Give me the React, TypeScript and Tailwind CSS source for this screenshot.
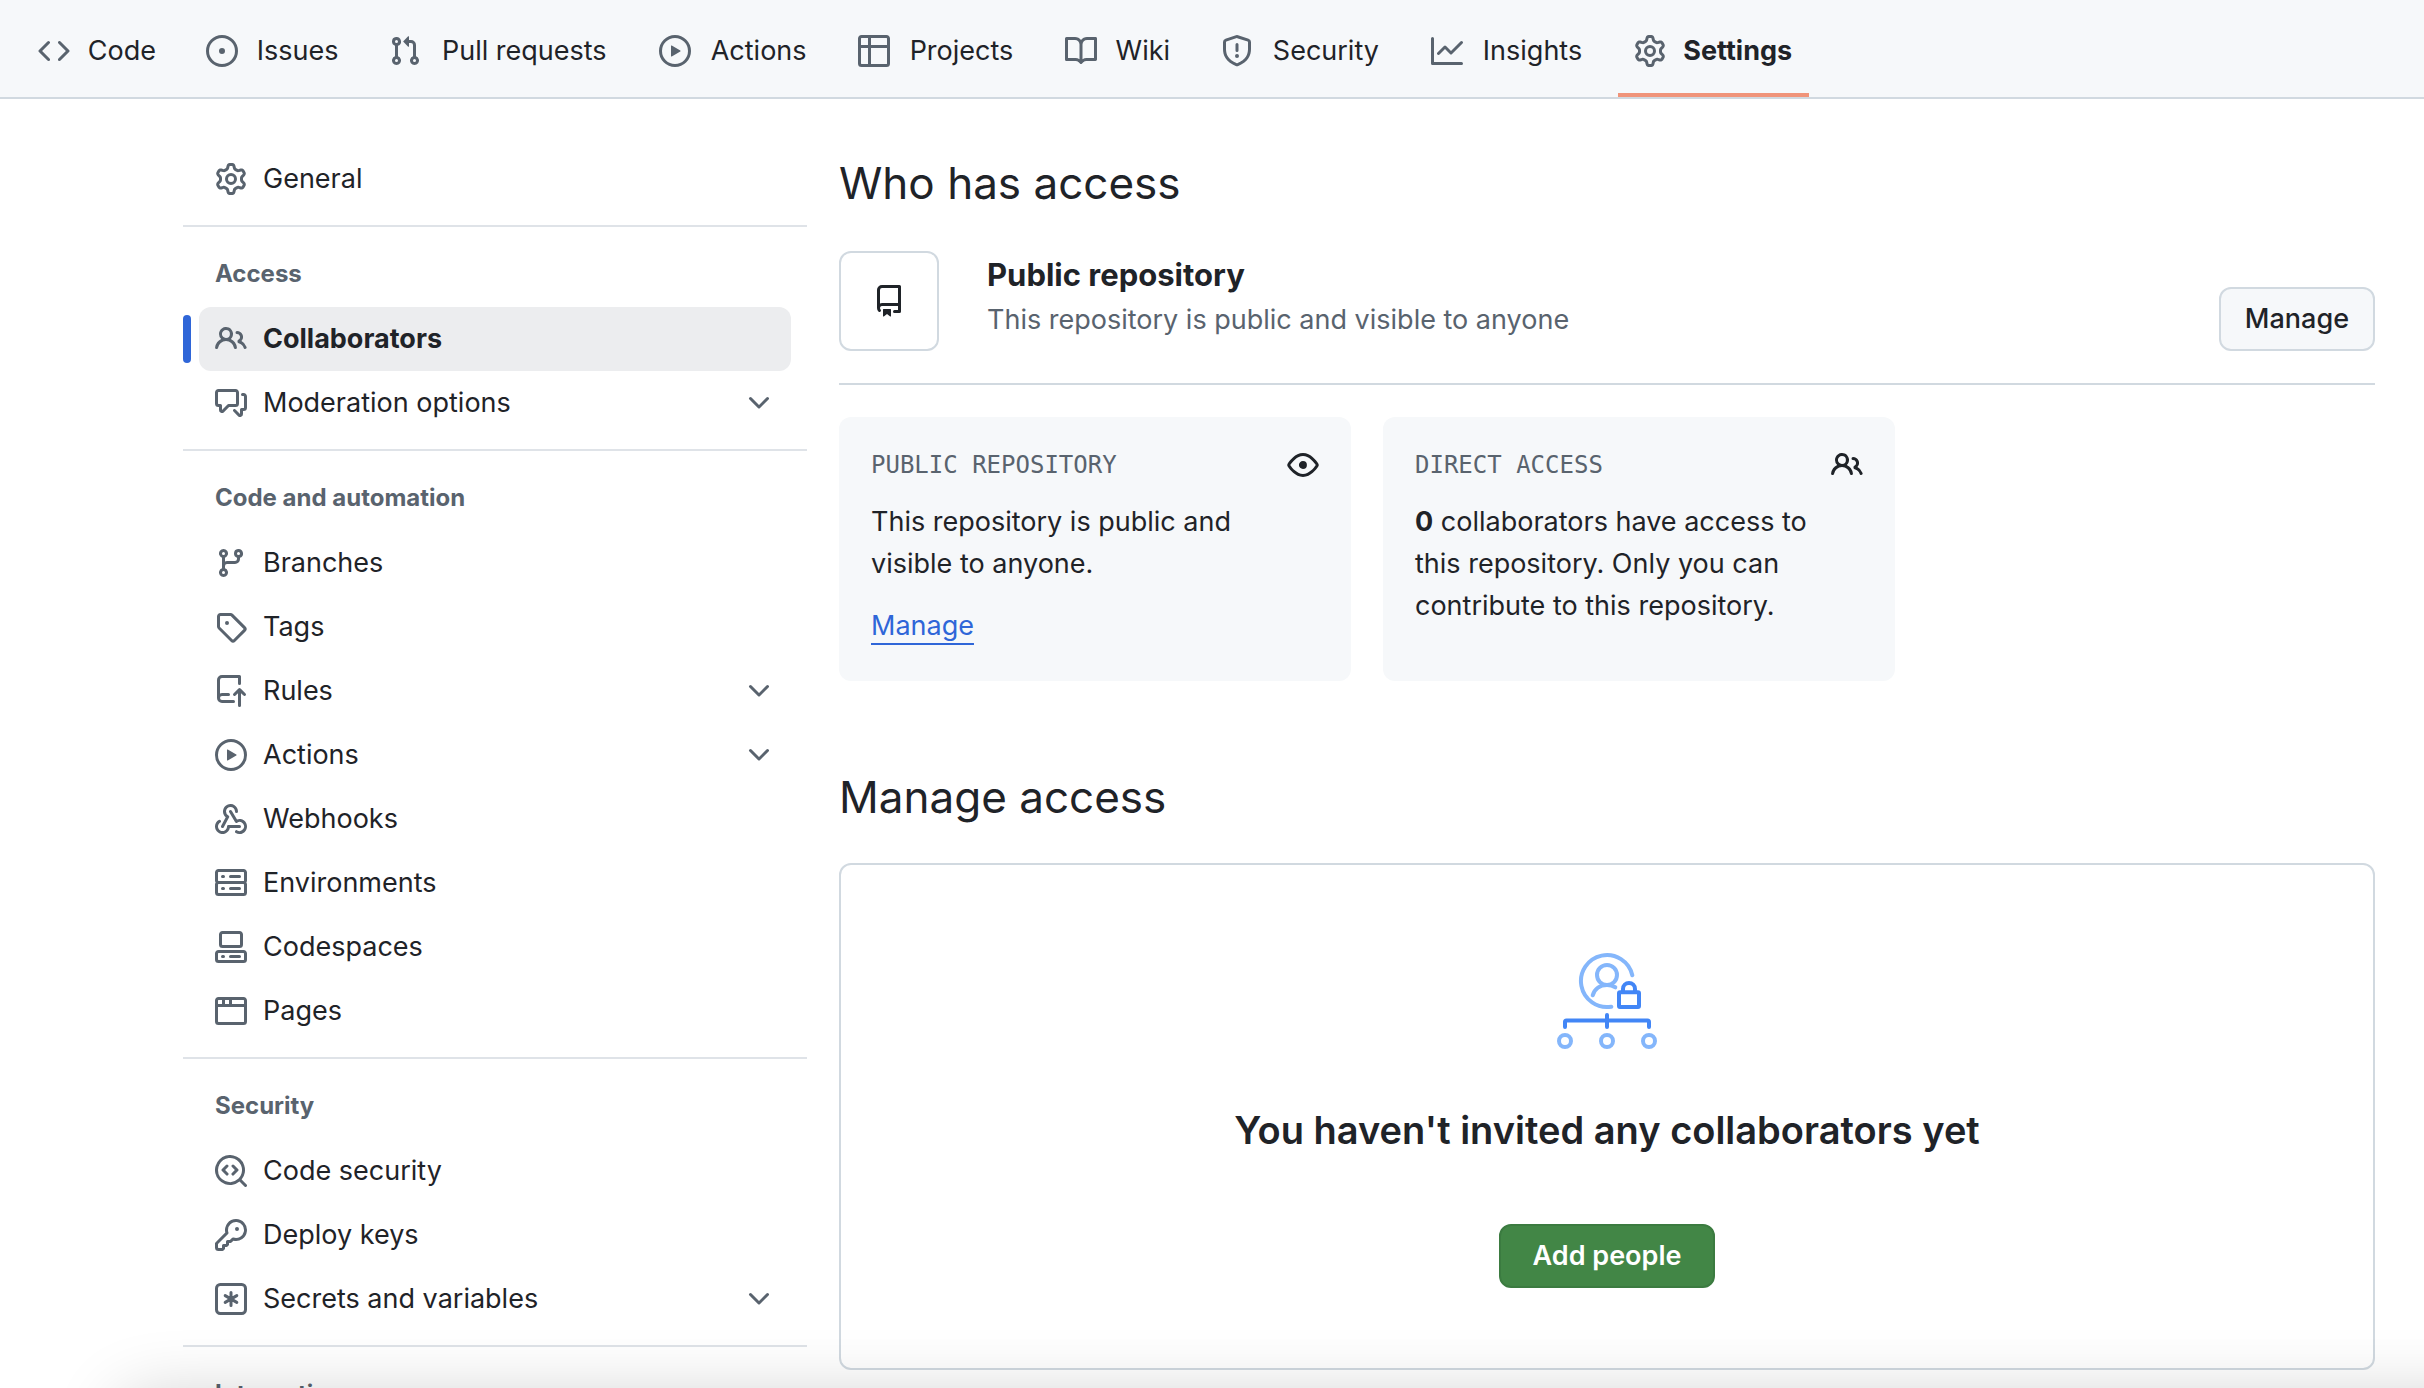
import type { ReactNode } from "react";

const paths = {
  code: "m11.28 3.22 4.25 4.25a.75.75 0 0 1 0 1.06l-4.25 4.25a.749.749 0 0 1-1.275-.326.749.749 0 0 1 .215-.734L13.94 8l-3.72-3.72a.749.749 0 0 1 .326-1.275.749.749 0 0 1 .734.215Zm-6.56 0a.751.751 0 0 1 1.042.018.751.751 0 0 1 .018 1.042L2.06 8l3.72 3.72a.749.749 0 0 1-.326 1.275.749.749 0 0 1-.734-.215L.47 8.53a.75.75 0 0 1 0-1.06Z",
  issue: "M8 9.5a1.5 1.5 0 1 0 0-3 1.5 1.5 0 0 0 0 3ZM8 0a8 8 0 1 1 0 16A8 8 0 0 1 8 0ZM1.5 8a6.5 6.5 0 1 0 13 0 6.5 6.5 0 0 0-13 0Z",
  pull: "M1.5 3.25a2.25 2.25 0 1 1 3 2.122v5.256a2.251 2.251 0 1 1-1.5 0V5.372A2.25 2.25 0 0 1 1.5 3.25Zm5.677-.177L9.573.677A.25.25 0 0 1 10 .854V2.5h1A2.5 2.5 0 0 1 13.5 5v5.628a2.251 2.251 0 1 1-1.5 0V5a1 1 0 0 0-1-1h-1v1.646a.25.25 0 0 1-.427.177L7.177 3.427a.25.25 0 0 1 0-.354ZM3.75 2.5a.75.75 0 1 0 0 1.5.75.75 0 0 0 0-1.5Zm0 9.5a.75.75 0 1 0 0 1.5.75.75 0 0 0 0-1.5Zm8.25.75a.75.75 0 1 0 1.5 0 .75.75 0 0 0-1.5 0Z",
  play: "M8 0a8 8 0 1 1 0 16A8 8 0 0 1 8 0ZM1.5 8a6.5 6.5 0 1 0 13 0 6.5 6.5 0 0 0-13 0Zm4.879-2.773 4.264 2.559a.25.25 0 0 1 0 .428l-4.264 2.559A.25.25 0 0 1 6 10.559V5.442a.25.25 0 0 1 .379-.215Z",
  table: "M0 1.75C0 .784.784 0 1.75 0h12.5C15.216 0 16 .784 16 1.75v12.5A1.75 1.75 0 0 1 14.25 16H1.75A1.75 1.75 0 0 1 0 14.25ZM6.5 6.5v8h7.75a.25.25 0 0 0 .25-.25V6.5Zm8-1.5V1.75a.25.25 0 0 0-.25-.25H6.5V5Zm-13 1.5v7.75c0 .138.112.25.25.25H5v-8ZM5 5V1.5H1.75a.25.25 0 0 0-.25.25V5Z",
  book: "M0 1.75A.75.75 0 0 1 .75 1h4.253c1.227 0 2.317.59 3 1.501A3.743 3.743 0 0 1 11.006 1h4.245a.75.75 0 0 1 .75.75v10.5a.75.75 0 0 1-.75.75h-4.507a2.25 2.25 0 0 0-1.591.659l-.622.621a.75.75 0 0 1-1.06 0l-.622-.621A2.25 2.25 0 0 0 5.258 13H.75a.75.75 0 0 1-.75-.75Zm7.251 10.324.004-5.073-.002-2.253A2.25 2.25 0 0 0 5.003 2.5H1.5v9h3.757a3.75 3.75 0 0 1 1.994.574ZM8.755 4.75l-.004 7.322a3.752 3.752 0 0 1 1.992-.572H14.5v-9h-3.495a2.25 2.25 0 0 0-2.25 2.25Z",
  shield: "M7.467.133a1.748 1.748 0 0 1 1.066 0l5.25 1.68A1.75 1.75 0 0 1 15 3.48V7c0 1.566-.32 3.182-1.303 4.682-.983 1.498-2.585 2.813-5.032 3.855a1.697 1.697 0 0 1-1.33 0c-2.447-1.042-4.049-2.357-5.032-3.855C1.32 10.182 1 8.566 1 7V3.48a1.755 1.755 0 0 1 1.217-1.667Zm.61 1.429a.25.25 0 0 0-.153 0l-5.25 1.68a.25.25 0 0 0-.174.238V7c0 1.358.275 2.666 1.057 3.86.784 1.194 2.121 2.34 4.366 3.297a.196.196 0 0 0 .154 0c2.245-.956 3.582-2.104 4.366-3.298C13.225 9.666 13.5 8.36 13.5 7V3.48a.251.251 0 0 0-.174-.237l-5.25-1.68ZM8.75 4.75v3a.75.75 0 0 1-1.5 0v-3a.75.75 0 0 1 1.5 0ZM9 10.5a1 1 0 1 1-2 0 1 1 0 0 1 2 0Z",
  graph: "M1.5 1.75V13.5h13.75a.75.75 0 0 1 0 1.5H.75a.75.75 0 0 1-.75-.75V1.75a.75.75 0 0 1 1.5 0Zm14.28 2.53-5.25 5.25a.75.75 0 0 1-1.06 0L7 7.06 4.28 9.78a.751.751 0 0 1-1.042-.018.751.751 0 0 1-.018-1.042l3.25-3.25a.75.75 0 0 1 1.06 0L10 7.94l4.72-4.72a.751.751 0 0 1 1.042.018.751.751 0 0 1 .018 1.042Z",
  gear: "M8 0a8.2 8.2 0 0 1 .701.031C9.444.095 9.99.645 10.16 1.29l.288 1.107c.018.066.079.158.212.224.231.114.454.243.668.386.123.082.233.09.299.071l1.103-.303c.644-.176 1.392.021 1.82.63.27.385.506.792.704 1.218.315.675.111 1.422-.364 1.891l-.814.806c-.049.048-.098.147-.088.294.016.257.016.515 0 .772-.01.147.038.246.088.294l.814.806c.475.469.679 1.216.364 1.891a7.977 7.977 0 0 1-.704 1.217c-.428.61-1.176.807-1.82.63l-1.102-.302c-.067-.019-.177-.011-.3.071a5.909 5.909 0 0 1-.668.386c-.133.066-.194.158-.211.224l-.29 1.106c-.168.646-.715 1.196-1.458 1.26a8.006 8.006 0 0 1-1.402 0c-.743-.064-1.289-.614-1.458-1.26l-.289-1.106c-.018-.066-.079-.158-.212-.224a5.738 5.738 0 0 1-.668-.386c-.123-.082-.233-.09-.299-.071l-1.103.303c-.644.176-1.392-.021-1.82-.63a8.12 8.12 0 0 1-.704-1.218c-.315-.675-.111-1.422.363-1.891l.815-.806c.05-.048.098-.147.088-.294a6.214 6.214 0 0 1 0-.772c.01-.147-.038-.246-.088-.294l-.815-.806C.635 6.045.431 5.298.746 4.623a7.92 7.92 0 0 1 .704-1.217c.428-.61 1.176-.807 1.82-.63l1.102.302c.067.019.177.011.3-.071.214-.143.437-.272.668-.386.133-.066.194-.158.211-.224l.29-1.106C6.009.645 6.556.095 7.299.03 7.53.01 7.764 0 8 0Zm-.571 1.525c-.036.003-.108.036-.137.146l-.289 1.105c-.147.561-.549.967-.998 1.189-.173.086-.34.183-.5.29-.417.278-.97.423-1.529.27l-1.103-.303c-.109-.03-.175.016-.195.045-.22.312-.412.644-.573.99-.014.031-.021.11.059.19l.815.806c.411.406.562.957.53 1.456a4.709 4.709 0 0 0 0 .582c.032.499-.119 1.05-.53 1.456l-.815.806c-.081.08-.073.159-.059.19.162.346.353.677.573.989.02.03.085.076.195.046l1.102-.303c.56-.153 1.113-.008 1.53.27.161.107.328.204.501.29.447.222.85.629.997 1.189l.289 1.105c.029.109.101.143.137.146a6.6 6.6 0 0 0 1.142 0c.036-.003.108-.036.137-.146l.289-1.105c.147-.561.549-.967.998-1.189.173-.086.34-.183.5-.29.417-.278.97-.423 1.529-.27l1.103.303c.109.029.175-.016.195-.045.22-.313.411-.644.573-.99.014-.031.021-.11-.059-.19l-.815-.806c-.411-.406-.562-.957-.53-1.456a4.709 4.709 0 0 0 0-.582c-.032-.499.119-1.05.53-1.456l.815-.806c.081-.08.073-.159.059-.19a6.464 6.464 0 0 0-.573-.989c-.02-.03-.085-.076-.195-.046l-1.102.303c-.56.153-1.113.008-1.53-.27a4.44 4.44 0 0 0-.501-.29c-.447-.222-.85-.629-.997-1.189l-.289-1.105c-.029-.11-.101-.143-.137-.146a6.6 6.6 0 0 0-1.142 0ZM11 8a3 3 0 1 1-6 0 3 3 0 0 1 6 0ZM9.5 8a1.5 1.5 0 1 0-3.001.001A1.5 1.5 0 0 0 9.5 8Z",
  people: "M2 5.5a3.5 3.5 0 1 1 5.898 2.549 5.508 5.508 0 0 1 3.034 4.084.75.75 0 1 1-1.482.235 4 4 0 0 0-7.9 0 .75.75 0 0 1-1.482-.236A5.507 5.507 0 0 1 3.102 8.05 3.493 3.493 0 0 1 2 5.5ZM11 4a3.001 3.001 0 0 1 2.22 5.018 5.01 5.01 0 0 1 2.56 3.012.749.749 0 0 1-.885.954.752.752 0 0 1-.549-.514 3.507 3.507 0 0 0-2.522-2.372.75.75 0 0 1-.574-.73v-.352a.75.75 0 0 1 .416-.672A1.5 1.5 0 0 0 11 5.5.75.75 0 0 1 11 4Zm-5.5-.5a2 2 0 1 0-.001 3.999A2 2 0 0 0 5.5 3.5Z",
  discussion: "M1.75 1h8.5c.966 0 1.75.784 1.75 1.75v5.5A1.75 1.75 0 0 1 10.25 10H7.061l-2.574 2.573A1.458 1.458 0 0 1 2 11.543V10h-.25A1.75 1.75 0 0 1 0 8.25v-5.5C0 1.784.784 1 1.75 1ZM1.5 2.75v5.5c0 .138.112.25.25.25h1a.75.75 0 0 1 .75.75v2.19l2.72-2.72a.749.749 0 0 1 .53-.22h3.5a.25.25 0 0 0 .25-.25v-5.5a.25.25 0 0 0-.25-.25h-8.5a.25.25 0 0 0-.25.25Zm13 2a.25.25 0 0 0-.25-.25h-.5a.75.75 0 0 1 0-1.5h.5c.966 0 1.75.784 1.75 1.75v5.5A1.75 1.75 0 0 1 14.25 12H14v1.543a1.458 1.458 0 0 1-2.487 1.03L9.22 12.28a.749.749 0 0 1 .326-1.275.749.749 0 0 1 .734.215l2.22 2.22v-2.19a.75.75 0 0 1 .75-.75h1a.25.25 0 0 0 .25-.25Z",
  branch: "M9.5 3.25a2.25 2.25 0 1 1 3 2.122V6A2.5 2.5 0 0 1 10 8.5H6a1 1 0 0 0-1 1v1.128a2.251 2.251 0 1 1-1.5 0V5.372a2.25 2.25 0 1 1 1.5 0v1.836A2.493 2.493 0 0 1 6 7h4a1 1 0 0 0 1-1v-.628A2.25 2.25 0 0 1 9.5 3.25Zm-6 0a.75.75 0 1 0 1.5 0 .75.75 0 0 0-1.5 0Zm8.25-.75a.75.75 0 1 0 0 1.5.75.75 0 0 0 0-1.5ZM4.25 12a.75.75 0 1 0 0 1.5.75.75 0 0 0 0-1.5Z",
  tag: "M1 7.775V2.75C1 1.784 1.784 1 2.75 1h5.025c.464 0 .91.184 1.238.513l6.25 6.25a1.75 1.75 0 0 1 0 2.474l-5.026 5.026a1.75 1.75 0 0 1-2.474 0l-6.25-6.25A1.752 1.752 0 0 1 1 7.775Zm1.5 0c0 .066.026.13.073.177l6.25 6.25a.25.25 0 0 0 .354 0l5.025-5.025a.25.25 0 0 0 0-.354l-6.25-6.25a.25.25 0 0 0-.177-.073H2.75a.25.25 0 0 0-.25.25ZM6 5a1 1 0 1 1 0 2 1 1 0 0 1 0-2Z",
  push: "M1 2.5A2.5 2.5 0 0 1 3.5 0h8.75a.75.75 0 0 1 .75.75v3.5a.75.75 0 0 1-1.5 0V1.5h-8a1 1 0 0 0-1 1v6.708A2.493 2.493 0 0 1 3.5 9h3.25a.75.75 0 0 1 0 1.5H3.5a1 1 0 0 0 0 2h5.75a.75.75 0 0 1 0 1.5H3.5A2.5 2.5 0 0 1 1 11.5Zm13.23 7.79h-.001l-1.224-1.224v6.184a.75.75 0 0 1-1.5 0V9.066L10.28 10.29a.75.75 0 0 1-1.06-1.061l2.505-2.504a.75.75 0 0 1 1.06 0L15.29 9.23a.751.751 0 0 1-.018 1.042.751.751 0 0 1-1.042.018Z",
  webhook: "M5.5 4.25a2.25 2.25 0 0 1 4.5 0 .75.75 0 0 0 1.5 0 3.75 3.75 0 1 0-6.14 2.889l-2.272 4.258a.75.75 0 0 0 1.324.706L7 7.25a.75.75 0 0 0-.309-1.015A2.25 2.25 0 0 1 5.5 4.25ZM7.364 3.607a.75.75 0 0 1 1.03.257l2.608 4.349a3.75 3.75 0 1 1-.628 6.785.75.75 0 0 1 .752-1.299 2.25 2.25 0 1 0-.033-3.88.75.75 0 0 1-1.03-.256L7.107 4.636a.75.75 0 0 1 .257-1.03ZM2.9 8.776A.75.75 0 0 1 2.625 9.8 2.25 2.25 0 1 0 6 11.75a.75.75 0 0 1 .75-.751h5.5a.75.75 0 0 1 0 1.5H7.425a3.751 3.751 0 1 1-5.55-3.998.75.75 0 0 1 1.024.274Z",
  server: "M1.75 1h12.5c.966 0 1.75.784 1.75 1.75v4c0 .372-.116.717-.314 1 .198.283.314.628.314 1v4a1.75 1.75 0 0 1-1.75 1.75H1.75A1.75 1.75 0 0 1 0 12.75v-4c0-.358.109-.707.314-1a1.739 1.739 0 0 1-.314-1v-4C0 1.784.784 1 1.75 1ZM1.5 2.75v4c0 .138.112.25.25.25h12.5a.25.25 0 0 0 .25-.25v-4a.25.25 0 0 0-.25-.25H1.75a.25.25 0 0 0-.25.25Zm.25 5.75a.25.25 0 0 0-.25.25v4c0 .138.112.25.25.25h12.5a.25.25 0 0 0 .25-.25v-4a.25.25 0 0 0-.25-.25ZM7 4.75A.75.75 0 0 1 7.75 4h4.5a.75.75 0 0 1 0 1.5h-4.5A.75.75 0 0 1 7 4.75ZM7.75 10h4.5a.75.75 0 0 1 0 1.5h-4.5a.75.75 0 0 1 0-1.5ZM3 4.75A.75.75 0 0 1 3.75 4h.5a.75.75 0 0 1 0 1.5h-.5A.75.75 0 0 1 3 4.75ZM3.75 10h.5a.75.75 0 0 1 0 1.5h-.5a.75.75 0 0 1 0-1.5Z",
  codespaces: "M0 11.25c0-.966.784-1.75 1.75-1.75h12.5c.966 0 1.75.784 1.75 1.75v3A1.75 1.75 0 0 1 14.25 16H1.75A1.75 1.75 0 0 1 0 14.25Zm2-9.5C2 .784 2.784 0 3.75 0h8.5C13.216 0 14 .784 14 1.75v5a1.75 1.75 0 0 1-1.75 1.75h-8.5A1.75 1.75 0 0 1 2 6.75Zm1.75-.25a.25.25 0 0 0-.25.25v5c0 .138.112.25.25.25h8.5a.25.25 0 0 0 .25-.25v-5a.25.25 0 0 0-.25-.25Zm-2 9.5a.25.25 0 0 0-.25.25v3c0 .138.112.25.25.25h12.5a.25.25 0 0 0 .25-.25v-3a.25.25 0 0 0-.25-.25ZM7 12.75a.75.75 0 0 1 .75-.75h4.5a.75.75 0 0 1 0 1.5h-4.5a.75.75 0 0 1-.75-.75Zm-4 0a.75.75 0 0 1 .75-.75h.5a.75.75 0 0 1 0 1.5h-.5a.75.75 0 0 1-.75-.75Z",
  browser: "M0 2.75C0 1.784.784 1 1.75 1h12.5c.966 0 1.75.784 1.75 1.75v10.5A1.75 1.75 0 0 1 14.25 15H1.75A1.75 1.75 0 0 1 0 13.25ZM14.5 6h-13v7.25c0 .138.112.25.25.25h12.5a.25.25 0 0 0 .25-.25Zm-6-3.5v2h6V2.75a.25.25 0 0 0-.25-.25ZM5 2.5v2h2v-2Zm-3.25 0a.25.25 0 0 0-.25.25V4.5h2v-2Z",
  codescan: "M8.47 4.97a.75.75 0 0 0 0 1.06L9.94 7.5 8.47 8.97a.75.75 0 1 0 1.06 1.06l2-2a.75.75 0 0 0 0-1.06l-2-2a.75.75 0 0 0-1.06 0ZM6.53 6.03a.75.75 0 0 0-1.06-1.06l-2 2a.75.75 0 0 0 0 1.06l2 2a.75.75 0 1 0 1.06-1.06L5.06 7.5l1.47-1.47ZM12.246 13.307a7.501 7.501 0 1 1 1.06-1.06l2.474 2.473a.749.749 0 1 1-1.06 1.06ZM1.5 7.5a6.002 6.002 0 0 0 3.608 5.504 6.002 6.002 0 0 0 6.486-1.117.748.748 0 0 1 .292-.293A6 6 0 1 0 1.5 7.5Z",
  key: "M10.5 0a5.499 5.499 0 1 1-1.288 10.848l-.932.932a.749.749 0 0 1-.53.22H7v.75a.749.749 0 0 1-.22.53l-.5.5a.749.749 0 0 1-.53.22H5v.75a.749.749 0 0 1-.22.53l-.5.5a.749.749 0 0 1-.53.22h-2A1.75 1.75 0 0 1 0 14.25v-2c0-.199.079-.389.22-.53l4.932-4.932A5.5 5.5 0 0 1 10.5 0Zm-4 5.5c-.001.431.069.86.205 1.269a.75.75 0 0 1-.181.768L1.5 12.56v1.69c0 .138.112.25.25.25h1.69l.06-.06v-1.19a.75.75 0 0 1 .75-.75h1.19l.06-.06v-1.19a.75.75 0 0 1 .75-.75h1.19l1.023-1.025a.75.75 0 0 1 .768-.18A4 4 0 1 0 6.5 5.5ZM11 6a1 1 0 1 1 0-2 1 1 0 0 1 0 2Z",
  chevron: "M12.78 5.22a.749.749 0 0 1 0 1.06l-4.25 4.25a.749.749 0 0 1-1.06 0L3.22 6.28a.749.749 0 1 1 1.06-1.06L8 8.939l3.72-3.719a.749.749 0 0 1 1.06 0Z",
  repo: "M2 2.5A2.5 2.5 0 0 1 4.5 0h8.75a.75.75 0 0 1 .75.75v12.5a.75.75 0 0 1-.75.75h-2.5a.75.75 0 0 1 0-1.5h1.75v-2h-8a1 1 0 0 0-.714 1.7.75.75 0 1 1-1.072 1.05A2.495 2.495 0 0 1 2 11.5Zm10.5-1h-8a1 1 0 0 0-1 1v6.708A2.486 2.486 0 0 1 4.5 9h8ZM5 12.25a.25.25 0 0 1 .25-.25h3.5a.25.25 0 0 1 .25.25v3.25a.25.25 0 0 1-.4.2l-1.45-1.087a.249.249 0 0 0-.3 0L5.4 15.7a.25.25 0 0 1-.4-.2Z",
  eye: "M8 2c1.981 0 3.671.992 4.933 2.078 1.27 1.091 2.187 2.345 2.637 3.023a1.62 1.62 0 0 1 0 1.798c-.45.678-1.367 1.932-2.637 3.023C11.67 13.008 9.981 14 8 14c-1.981 0-3.671-.992-4.933-2.078C1.797 10.83.88 9.576.43 8.898a1.62 1.62 0 0 1 0-1.798c.45-.677 1.367-1.931 2.637-3.022C4.33 2.992 6.019 2 8 2ZM1.679 7.932a.12.12 0 0 0 0 .136c.411.622 1.241 1.75 2.366 2.717C5.176 11.758 6.527 12.5 8 12.5c1.473 0 2.825-.742 3.955-1.715 1.124-.967 1.954-2.096 2.366-2.717a.12.12 0 0 0 0-.136c-.412-.621-1.242-1.75-2.366-2.717C10.824 4.242 9.473 3.5 8 3.5c-1.473 0-2.825.742-3.955 1.715-1.124.967-1.954 2.096-2.366 2.717ZM8 10a2 2 0 1 1-.001-3.999A2 2 0 0 1 8 10Z",
};

type IconName = keyof typeof paths | "asterisk";

function Icon({ name, className }: { name: IconName; className?: string }) {
  return (
    <svg viewBox="0 0 16 16" className={`size-8 shrink-0 ${className ?? ""}`} fill="currentColor" aria-hidden="true">
      {name === "asterisk" ? (
        <g fill="none" stroke="currentColor" strokeWidth="1.5">
          <rect x=".75" y=".75" width="14.5" height="14.5" rx="1.9" />
          <path d="M8 4.75v6.500M5.100 6.300l5.800 3.400M10.900 6.300 5.100 9.700" strokeLinecap="round" />
        </g>
      ) : (
        <path d={paths[name]} />
      )}
    </svg>
  );
}

const tabs: { label: string; icon: IconName; active?: boolean }[] = [
  { label: "Code", icon: "code" },
  { label: "Issues", icon: "issue" },
  { label: "Pull requests", icon: "pull" },
  { label: "Actions", icon: "play" },
  { label: "Projects", icon: "table" },
  { label: "Wiki", icon: "book" },
  { label: "Security", icon: "shield" },
  { label: "Insights", icon: "graph" },
  { label: "Settings", icon: "gear", active: true },
];

type Item = { label: string; icon: IconName; expandable?: boolean; active?: boolean };

const groups: { title?: string; items: Item[] }[] = [
  { items: [{ label: "General", icon: "gear" }] },
  {
    title: "Access",
    items: [
      { label: "Collaborators", icon: "people", active: true },
      { label: "Moderation options", icon: "discussion", expandable: true },
    ],
  },
  {
    title: "Code and automation",
    items: [
      { label: "Branches", icon: "branch" },
      { label: "Tags", icon: "tag" },
      { label: "Rules", icon: "push", expandable: true },
      { label: "Actions", icon: "play", expandable: true },
      { label: "Webhooks", icon: "webhook" },
      { label: "Environments", icon: "server" },
      { label: "Codespaces", icon: "codespaces" },
      { label: "Pages", icon: "browser" },
    ],
  },
  {
    title: "Security",
    items: [
      { label: "Code security", icon: "codescan" },
      { label: "Deploy keys", icon: "key" },
      { label: "Secrets and variables", icon: "asterisk", expandable: true },
    ],
  },
  { title: "Integrations", items: [] },
];

function SideItem({ item }: { item: Item }) {
  const row = "flex h-16 w-full items-center gap-4 rounded-xl px-4 text-left";
  if (item.expandable) {
    return (
      <li className="mx-4">
        <button type="button" aria-expanded="false" className={row}>
          <Icon name={item.icon} className="text-[#59636e]" />
          <span className="grow">{item.label}</span>
          <Icon name="chevron" className="text-[#59636e]" />
        </button>
      </li>
    );
  }
  return (
    <li className="relative mx-4">
      {item.active && <span className="absolute top-2 bottom-2 -left-4 w-2 rounded-xl bg-[#2f66d8]" />}
      <a
        href="#"
        aria-current={item.active ? "page" : undefined}
        className={`${row} ${item.active ? "bg-[#ecedef] font-bold" : ""}`}
      >
        <Icon name={item.icon} className="text-[#59636e]" />
        <span className="grow">{item.label}</span>
      </a>
    </li>
  );
}

function AccessCard({ title, icon, children }: { title: string; icon: IconName; children: ReactNode }) {
  return (
    <section className="w-1/3 rounded-xl bg-[#f6f8fa] px-8 pt-8 pb-[34px]">
      <header className="flex items-center justify-between">
        <h3 className="font-['DejaVu_Sans_Mono',monospace] text-[24px] leading-8 text-[#59636e]">{title}</h3>
        <Icon name={icon} />
      </header>
      <div className="mt-5 pr-8 leading-[42px]">{children}</div>
    </section>
  );
}

function Illustration() {
  return (
    <svg viewBox="0 0 100 96" className="h-24 w-[100px]" fill="none" strokeWidth="4" strokeLinecap="round" aria-hidden="true">
      <g stroke="#84b6fb">
        <path d="M75.300 22.300A26 26 0 1 0 54.300 53.700" />
        <circle cx="50" cy="22" r="10" />
        <path d="M35.700 42.300c2-6.500 7.500-10.300 14.300-10.300 3 0 6 .8 8.300 2.300" />
        <circle cx="8" cy="88" r="6" />
        <circle cx="50" cy="88" r="6" />
        <circle cx="92" cy="88" r="6" />
      </g>
      <g stroke="#4286f6">
        <rect x="62" y="39.300" width="20" height="14.700" rx="1" />
        <path d="M66 39v-3a6 6 0 0 1 12 0v3M50 62v12M8 74v-5q0-1.500 1.500-1.500h81q1.500 0 1.500 1.500v5" />
      </g>
    </svg>
  );
}

export default function App() {
  return (
    <div className="relative flex h-screen flex-col overflow-hidden bg-white font-[Inter,sans-serif] text-[27px] leading-10 text-[#1f2328]">
      <nav aria-label="Repository" className="flex h-[99px] shrink-0 gap-4 border-b-2 border-[#d1d9e0] bg-[#f6f8fa] px-[22px]">
        {tabs.map((tab) => (
          <a
            key={tab.label}
            href="#"
            aria-current={tab.active ? "page" : undefined}
            className={`flex items-center gap-4 border-b-4 px-4 pt-2 ${
              tab.active ? "border-[#f0947a] font-bold" : "border-transparent"
            }`}
          >
            <Icon name={tab.icon} className="text-[#59636e]" />
            <span
              data-label={tab.label}
              className="px-px text-center after:invisible after:block after:h-0 after:overflow-hidden after:font-bold after:content-[attr(data-label)]"
            >
              {tab.label}
            </span>
          </a>
        ))}
      </nav>

      <div className="flex gap-8 pr-[49px] pl-[183px]">
        <aside className="w-[624px] shrink-0 pt-12">
          {groups.map((group, i) => (
            <section key={group.title ?? "general"}>
              {i > 0 && <hr className="my-[14px] border-t-2 border-[#dfe3e8]" />}
              {group.title && (
                <h3 className="flex h-[66px] items-center px-8 text-[24px] font-bold text-[#59636e]">{group.title}</h3>
              )}
              <ul>
                {group.items.map((item) => (
                  <SideItem key={item.label} item={item} />
                ))}
              </ul>
            </section>
          ))}
        </aside>

        <main className="min-w-0 grow pt-12">
          <h2 className="text-[44px] leading-[72px]">Who has access</h2>
          <div className="mt-8 flex items-start border-b-2 border-[#d1d9e0] pb-8">
            <div className="flex size-[100px] items-center justify-center rounded-xl border-2 border-[#d1d9e0]">
              <Icon name="repo" />
            </div>
            <div className="ml-12 grow pt-1">
              <h3 className="text-[31px] leading-10 font-bold">Public repository</h3>
              <p className="mt-1 leading-[42px] text-[#59636e]">This repository is public and visible to anyone</p>
            </div>
            <button
              type="button"
              className="h-16 self-end rounded-xl border-2 border-[#d1d9e0] bg-[#f6f8fa] px-6 font-medium"
            >
              Manage
            </button>
          </div>

          <div className="mt-8 flex gap-8">
            <AccessCard title="PUBLIC REPOSITORY" icon="eye">
              <p>This repository is public and visible to anyone.</p>
              <a href="#" className="mt-5 inline-block text-[#2f66d8] underline decoration-2 underline-offset-8">
                Manage
              </a>
            </AccessCard>
            <AccessCard title="DIRECT ACCESS" icon="people">
              <p>
                <strong className="font-bold">0</strong> collaborators have access to this repository. Only you can
                contribute to this repository.
              </p>
            </AccessCard>
          </div>

          <h2 className="mt-20 text-[44px] leading-[72px]">Manage access</h2>
          <section className="mt-[30px] flex flex-col items-center rounded-xl border-2 border-[#d1d9e0] pt-[88px] pb-20">
            <Illustration />
            <h3 className="mt-[51px] text-[38px] leading-[60px] font-semibold">You haven&apos;t invited any collaborators yet</h3>
            <button
              type="button"
              className="mt-16 h-16 rounded-xl border-2 border-[#3b7b40] bg-[#428646] px-8 font-semibold text-white"
            >
              Add people
            </button>
          </section>
        </main>
      </div>

      <div className="pointer-events-none absolute -right-40 -bottom-[110px] left-[120px] h-[100px] rounded-3xl shadow-[0_0_70px_rgba(0,0,0,0.2)]" />
    </div>
  );
}
